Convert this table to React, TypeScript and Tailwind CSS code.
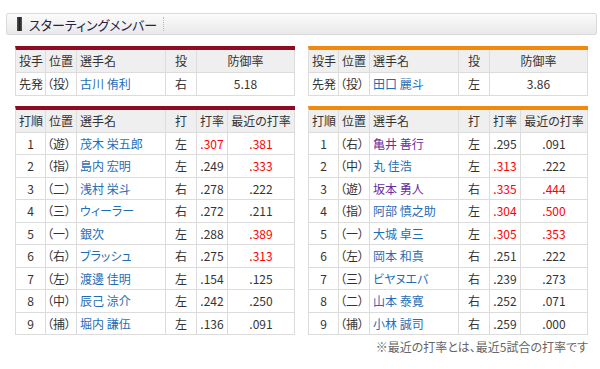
import React from "react";

type Row = {
  n: string;
  pos: string;
  name: string;
  hand: string;
  avg: string;
  avgRed?: boolean;
  recent: string;
  recentRed?: boolean;
  visited?: boolean;
};

const left: Row[] = [
  { n: "1", pos: "（遊）", name: "茂木 栄五郎", hand: "左", avg: ".307", avgRed: true, recent: ".381", recentRed: true },
  { n: "2", pos: "（指）", name: "島内 宏明", hand: "左", avg: ".249", recent: ".333", recentRed: true },
  { n: "3", pos: "（二）", name: "浅村 栄斗", hand: "右", avg: ".278", recent: ".222" },
  { n: "4", pos: "（三）", name: "ウィーラー", hand: "右", avg: ".272", recent: ".211" },
  { n: "5", pos: "（一）", name: "銀次", hand: "左", avg: ".288", recent: ".389", recentRed: true },
  { n: "6", pos: "（右）", name: "ブラッシュ", hand: "右", avg: ".275", recent: ".313", recentRed: true },
  { n: "7", pos: "（左）", name: "渡邊 佳明", hand: "左", avg: ".154", recent: ".125" },
  { n: "8", pos: "（中）", name: "辰己 涼介", hand: "左", avg: ".242", recent: ".250" },
  { n: "9", pos: "（捕）", name: "堀内 謙伍", hand: "左", avg: ".136", recent: ".091" },
];

const right: Row[] = [
  { n: "1", pos: "（右）", name: "亀井 善行", hand: "左", avg: ".295", recent: ".091", visited: true },
  { n: "2", pos: "（中）", name: "丸 佳浩", hand: "左", avg: ".313", avgRed: true, recent: ".222" },
  { n: "3", pos: "（遊）", name: "坂本 勇人", hand: "右", avg: ".335", avgRed: true, recent: ".444", recentRed: true, visited: true },
  { n: "4", pos: "（指）", name: "阿部 慎之助", hand: "左", avg: ".304", avgRed: true, recent: ".500", recentRed: true },
  { n: "5", pos: "（一）", name: "大城 卓三", hand: "左", avg: ".305", avgRed: true, recent: ".353", recentRed: true },
  { n: "6", pos: "（左）", name: "岡本 和真", hand: "右", avg: ".251", recent: ".222" },
  { n: "7", pos: "（三）", name: "ビヤヌエバ", hand: "右", avg: ".239", recent: ".273" },
  { n: "8", pos: "（二）", name: "山本 泰寛", hand: "右", avg: ".252", recent: ".071" },
  { n: "9", pos: "（捕）", name: "小林 誠司", hand: "右", avg: ".259", recent: ".000" },
];

const cell = "border-r border-b border-[#dcdcdc] flex items-center text-[#333]";
const L = `${cell} justify-start pl-[3px]`;
const P = `${cell} justify-start pl-[1px]`;
const C = `${cell} justify-center`;

const rowHeights = ["h-[22px]", "h-[23px]", "h-[22px]", "h-[23px]", "h-[22px]", "h-[23px]", "h-[22px]", "h-[23px]", "h-[22px]"];

function PitcherTable({ color, name, hand, era }: { color: string; name: string; hand: string; era: string }) {
  return (
    <div className={`w-[280px] border-t-[4px] border-l border-l-[#dcdcdc] ${color}`}>
      <div className="grid grid-cols-[30px_31px_89px_31px_1fr] h-[23px] bg-[#efefef]">
        <div className={L}>投手</div>
        <div className={L}>位置</div>
        <div className={L}>選手名</div>
        <div className={C}>投</div>
        <div className={C}>防御率</div>
      </div>
      <div className="grid grid-cols-[30px_31px_89px_31px_1fr] h-[23px] bg-white">
        <div className={L}>先発</div>
        <div className={P}>（投）</div>
        <div className={`${L} !text-[#1f6db5]`}>{name}</div>
        <div className={C}>{hand}</div>
        <div className={C}>{era}</div>
      </div>
    </div>
  );
}

function BatTable({ color, rows }: { color: string; rows: Row[] }) {
  return (
    <div className={`w-[280px] border-t-[4px] border-l border-l-[#dcdcdc] ${color}`}>
      <div className="grid grid-cols-[30px_31px_89px_31px_31px_1fr] h-[23px] bg-[#efefef]">
        <div className={L}>打順</div>
        <div className={L}>位置</div>
        <div className={L}>選手名</div>
        <div className={C}>打</div>
        <div className={C}>打率</div>
        <div className={C}>最近の打率</div>
      </div>
      {rows.map((r, i) => (
        <div key={r.n} className={`grid grid-cols-[30px_31px_89px_31px_31px_1fr] bg-white ${rowHeights[i]}`}>
          <div className={C}>{r.n}</div>
          <div className={P}>{r.pos}</div>
          <div className={`${L} ${r.visited ? "!text-[#6a2ca0]" : "!text-[#1f6db5]"}`}>{r.name}</div>
          <div className={C}>{r.hand}</div>
          <div className={`${C} ${r.avgRed ? "!text-[#f00]" : ""}`}>{r.avg}</div>
          <div className={`${C} ${r.recentRed ? "!text-[#f00]" : ""}`}>{r.recent}</div>
        </div>
      ))}
    </div>
  );
}

export default function App() {
  return (
    <div
      className="w-[600px] h-[369px] bg-white overflow-hidden text-[12px] leading-none [font-feature-settings:'palt'] pt-[13px]"
      style={{ fontFamily: '"Noto Sans CJK JP", "Noto Sans", sans-serif' }}
    >
      <div className="ml-[6px] mr-[3px] h-[22px] rounded-[2px] border border-[#dadada] bg-gradient-to-b from-[#fbfbfb] to-[#e9e9e9] flex items-center">
        <div className="ml-[10px] w-[5px] h-[14px] bg-gradient-to-r from-[#555] via-[#222] to-[#555]" />
        <div className="ml-[7px] text-[13px] text-[#23234a]">スターティングメンバー</div>
        <div className="ml-[6px] h-[14px] border-l border-dotted border-[#bbb]" />
      </div>

      <div className="flex gap-[13px] pl-[15px] mt-[11px]">
        <div className="flex flex-col gap-[10px]">
          <PitcherTable color="border-t-[#8c0c25]" name="古川 侑利" hand="右" era="5.18" />
          <BatTable color="border-t-[#8c0c25]" rows={left} />
        </div>
        <div className="flex flex-col gap-[10px]">
          <PitcherTable color="border-t-[#f08a0c]" name="田口 麗斗" hand="左" era="3.86" />
          <BatTable color="border-t-[#f08a0c]" rows={right} />
          <div className="-mt-[4px] text-right text-[12px] text-[#666]">※最近の打率とは、最近5試合の打率です</div>
        </div>
      </div>
    </div>
  );
}
